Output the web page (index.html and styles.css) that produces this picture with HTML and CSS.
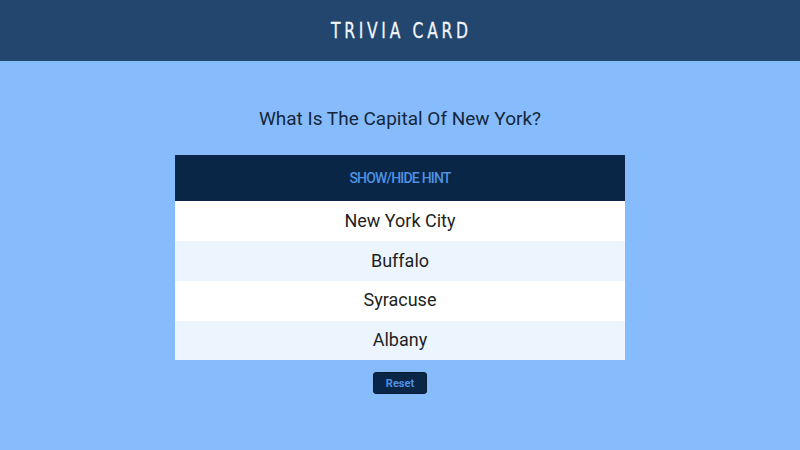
FILE: index.html
```html
<!DOCTYPE html>
<html lang="en">
<head>
<meta charset="utf-8">
<title>Trivia Card</title>
<link rel="stylesheet" href="styles.css">
</head>
<body>
<header class="topbar">
  <h1 class="brand">TRIVIA CARD</h1>
</header>
<main class="content">
  <h2 class="question">What Is The Capital Of New York?</h2>
  <section class="card">
    <button class="hint">SHOW/HIDE HINT</button>
    <ul class="answers">
      <li class="answer">New York City</li>
      <li class="answer">Buffalo</li>
      <li class="answer">Syracuse</li>
      <li class="answer">Albany</li>
    </ul>
  </section>
  <button class="reset">Reset</button>
</main>
</body>
</html>
```
FILE: styles.css
```css
html, body {
  margin: 0;
  padding: 0;
}
body {
  background: #86bcfc;
  font-family: Roboto, "Noto Sans", sans-serif;
  color: #1a2535;
  height: 450px;
}
.topbar {
  background: #23466e;
  height: 61px;
  display: flex;
  align-items: center;
  justify-content: center;
}
.brand {
  margin: 0;
  font-family: "DejaVu Sans", sans-serif;
  font-weight: 400;
  font-size: 21px;
  letter-spacing: 5px;
  color: #f2f6fb;
  padding-left: 5px;
  transform: scaleX(0.74);
  -webkit-text-stroke: 0.3px #f2f6fb;
}
.content {
  display: flex;
  flex-direction: column;
  align-items: center;
}
.question {
  margin: 45px 0 0;
  height: 25px;
  line-height: 25px;
  font-size: 19px;
  font-weight: 400;
  color: #15263c;
}
.card {
  margin-top: 24px;
  width: 450px;
  display: flex;
  flex-direction: column;
}
.hint {
  height: 46px;
  border: none;
  background: #0a2647;
  color: #4f91e2;
  font-family: Roboto, sans-serif;
  font-size: 14px;
  font-weight: 500;
  letter-spacing: -0.8px;
  padding: 0;
}
.answers {
  list-style: none;
  margin: 0;
  padding: 0;
}
.answer {
  height: 40px;
  line-height: 39px;
  text-align: center;
  font-size: 18px;
  background: #ffffff;
  color: #1f1f1f;
}
.answer:nth-child(even) {
  background: #ecf5fe;
}
.answer:nth-child(3), .answer:nth-child(4) {
  height: 39.5px;
  line-height: 38px;
}
.reset {
  margin-top: 12px;
  width: 54px;
  height: 22px;
  background: #0a2647;
  color: #4f91e2;
  border: 1px solid #051a33;
  border-radius: 3px;
  font-family: Roboto, sans-serif;
  font-weight: 700;
  font-size: 11px;
  padding: 0;
}
```
